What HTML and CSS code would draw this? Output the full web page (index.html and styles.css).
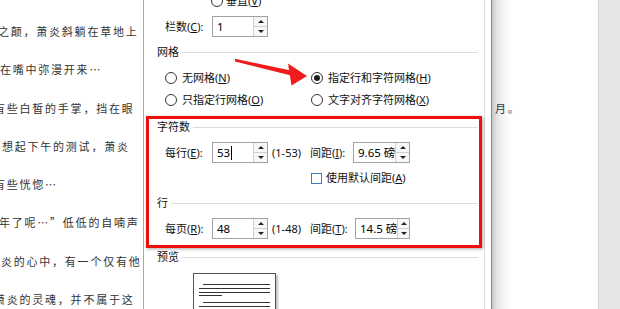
FILE: index.html
```html
<!DOCTYPE html>
<html lang="zh-CN">
<head>
<meta charset="utf-8">
<title>稿纸设置</title>
<link rel="stylesheet" href="styles.css">
</head>
<body>
<div class="screen">
  <div class="page-left">
    <div class="doc-line l1">之颠，萧炎斜躺在草地上</div>
    <div class="doc-line l2">在嘴中弥漫开来…</div>
    <div class="doc-line l3">有些白皙的手掌，挡在眼</div>
    <div class="doc-line l4">想起下午的测试，萧炎</div>
    <div class="doc-line l5">有些恍惚…</div>
    <div class="doc-line l6">年了呢…”低低的自喃声</div>
    <div class="doc-line l7">炎的心中，有一个仅有他</div>
    <div class="doc-line l8">萧炎的灵魂，并不属于这</div>
  </div>

  <div class="dialog">
    <div class="dlg-main">
      <div class="row row-v">
        <span class="radio"></span><span class="txt">垂直(<u>V</u>)</span>
      </div>
      <div class="row row-cols">
        <span class="lbl">栏数(<u>C</u>):</span>
        <span class="spin-input"><span class="val">1</span><span class="spin"><span class="up"></span><span class="down"></span></span></span>
      </div>

      <div class="group-title gt-grid"><span>网格</span></div>
      <div class="row radio-row rr1">
        <span class="opt"><span class="radio"></span><span class="txt">无网格(<u>N</u>)</span></span>
        <span class="opt"><span class="radio checked"></span><span class="txt">指定行和字符网格(<u>H</u>)</span></span>
      </div>
      <div class="row radio-row rr2">
        <span class="opt"><span class="radio"></span><span class="txt">只指定行网格(<u>O</u>)</span></span>
        <span class="opt"><span class="radio"></span><span class="txt">文字对齐字符网格(<u>X</u>)</span></span>
      </div>

      <div class="group-title gt-chars"><span>字符数</span></div>
      <div class="row field-row fr1">
        <span class="half">
          <span class="lbl">每行(<u>E</u>):</span>
          <span class="spin-input"><span class="val">53<span class="caret"></span></span><span class="spin"><span class="up"></span><span class="down"></span></span></span>
          <span class="range">(1-53)</span>
        </span>
        <span class="half">
          <span class="lbl lbl-r">间距(<u>I</u>):</span>
          <span class="spin-input wide"><span class="val">9.65 磅</span><span class="spin"><span class="up"></span><span class="down"></span></span></span>
        </span>
      </div>
      <div class="row check-row">
        <span class="half"></span>
        <span class="opt"><span class="check"></span><span class="txt">使用默认间距(<u>A</u>)</span></span>
      </div>

      <div class="group-title gt-lines"><span>行</span></div>
      <div class="row field-row fr2">
        <span class="half">
          <span class="lbl">每页(<u>R</u>):</span>
          <span class="spin-input"><span class="val">48</span><span class="spin"><span class="up"></span><span class="down"></span></span></span>
          <span class="range">(1-48)</span>
        </span>
        <span class="half">
          <span class="lbl lbl-r2">间距(<u>T</u>):</span>
          <span class="spin-input wide2"><span class="val">14.5 磅</span><span class="spin"><span class="up"></span><span class="down"></span></span></span>
        </span>
      </div>

      <div class="group-title gt-preview"><span>预览</span></div>
      <div class="preview">
        <div class="pl pl1"></div>
        <div class="pl pl2"></div>
        <div class="pl pl3"></div>
        <div class="pl pl4"></div>
        <div class="pl pl5"></div>
        <div class="pl pl6"></div>
      </div>
    </div>
    <div class="dlg-vline"></div>
    <div class="dlg-gap"></div>
  </div>

  <div class="page-right">
    <div class="doc-line r3">月。</div>
  </div>
  <div class="bg-gray"></div>
</div>

<div class="red-box"></div>
<svg class="arrow" width="620" height="309" viewBox="0 0 620 309">
  <polygon points="235,58.8 291,70.6 290,75.2 235,61.4" fill="#ee1c1c"/>
  <polygon points="288,63.5 307,76 291.5,85.5" fill="#ee1c1c"/>
</svg>
</body>
</html>
```

FILE: styles.css
```css
* { box-sizing: border-box; }

html, body {
  margin: 0;
  padding: 0;
}

body {
  width: 620px;
  height: 309px;
  overflow: hidden;
  position: relative;
  background: #fff;
  font-family: "Noto Sans", "Noto Sans CJK SC", sans-serif;
  color: #111;
}

.screen {
  display: flex;
  width: 620px;
  height: 309px;
  overflow: hidden;
}

/* ---------- document page (left) ---------- */
.page-left {
  width: 143px;
  flex-shrink: 0;
  overflow: hidden;
  padding-top: 12px;
  background: #fff;
}

.doc-line {
  font-family: "Noto Sans CJK SC", sans-serif;
  font-size: 11px;
  letter-spacing: 1.77px;
  line-height: 38.3px;
  height: 38.3px;
  color: #333;
  white-space: nowrap;
}

.l1 { margin-left: -2px; }
.l2 { margin-left: 0; }
.l3 { margin-left: -6px; }
.l4 { margin-left: 2px; }
.l5 { margin-left: -6px; }
.l6 { margin-left: -1px; }
.l7 { margin-left: 1px; }
.l8 { margin-left: -6px; }

/* ---------- dialog ---------- */
.dialog {
  width: 349px;
  height: 309px;
  flex-shrink: 0;
  display: flex;
  overflow: hidden;
  background: #fff;
  border-left: 1px solid #a8a8a8;
  border-right: 1px solid #858585;
}

.dlg-main {
  width: 340px;
  padding: 0 6px 0 13px;
  display: flex;
  flex-direction: column;
  font-size: 11px;
  line-height: 16px;
}

.dlg-main > * { flex-shrink: 0; }

.dlg-vline {
  width: 1px;
  background: #dedede;
}

.dlg-gap {
  width: 6px;
}

.row {
  display: flex;
  align-items: center;
  padding-left: 8px;
  white-space: nowrap;
}

u { text-decoration: underline; text-underline-offset: 1px; }

.row-v {
  height: 20px;
  margin-top: -9px;
  padding-left: 54px;
}
.row-v .txt { margin-left: 3px; }

.row-cols {
  height: 21px;
  margin-top: 5px;
}

.lbl {
  width: 47px;
  flex-shrink: 0;
}
.lbl-r { width: 43px; }
.lbl-r2 { width: 45px; }

.spin-input {
  display: flex;
  width: 56px;
  height: 21px;
  border: 1px solid #a2a2a2;
  background: #fff;
  flex-shrink: 0;
}
.spin-input.wide { width: 57px; }
.spin-input.wide2 { width: 55px; }

.val {
  flex: 1;
  display: flex;
  align-items: center;
  padding-left: 4px;
  font-size: 11.5px;
  color: #000;
}

.caret {
  display: inline-block;
  width: 1px;
  height: 14px;
  background: #000;
  margin-left: 1px;
}

.spin {
  width: 14px;
  display: flex;
  flex-direction: column;
  border-left: 1px solid #cfcfcf;
}
.spin span {
  flex: 1;
  display: flex;
  align-items: center;
  justify-content: center;
  background: #f7f7f7;
}
.spin .up { border-bottom: 1px solid #cfcfcf; }
.spin .up::before {
  content: "";
  border-left: 3px solid transparent;
  border-right: 3px solid transparent;
  border-bottom: 3px solid #222;
}
.spin .down::before {
  content: "";
  border-left: 3px solid transparent;
  border-right: 3px solid transparent;
  border-top: 3px solid #222;
}

.group-title {
  display: flex;
  align-items: center;
  height: 16px;
  white-space: nowrap;
}
.group-title::after {
  content: "";
  flex: 1;
  border-top: 1px solid #dcdcdc;
  margin-left: 3px;
}
.gt-grid { margin-top: 7px; }
.gt-chars { margin-top: 9px; }
.gt-lines { margin-top: 9px; }
.gt-preview { margin-top: 10px; }

.radio-row { height: 20px; }
.rr1 { margin-top: 8px; }
.rr2 { margin-top: 2px; }

.opt {
  display: flex;
  align-items: center;
}
.radio-row .opt:first-child { width: 146px; }
.opt .txt { margin-left: 5px; }

.radio {
  width: 12px;
  height: 12px;
  border: 1px solid #333;
  border-radius: 50%;
  display: flex;
  align-items: center;
  justify-content: center;
  background: #fff;
  flex-shrink: 0;
}
.radio.checked::after {
  content: "";
  width: 6px;
  height: 6px;
  border-radius: 50%;
  background: #1e1e1e;
}

.field-row { height: 21px; }
.fr1 { margin-top: 7px; }
.fr2 { margin-top: 7px; }

.half {
  display: flex;
  align-items: center;
  width: 145px;
  flex-shrink: 0;
}

.range { margin-left: 4px; }

.check-row { height: 16px; margin-top: 7px; }
.check-row .opt { margin-left: 1px; }
.check-row .txt { margin-left: 4px; }
.check {
  width: 11px;
  height: 11px;
  border: 1px solid #3a7cc6;
  background: #fff;
  flex-shrink: 0;
}

.preview {
  margin-top: 8px;
  margin-left: 36px;
  width: 83px;
  height: 60px;
  border: 1px solid #555;
  background: #fff;
  box-shadow: 2px 2px 2px rgba(0, 0, 0, 0.25);
  padding-top: 10px;
}
.pl {
  height: 1px;
  background: #333;
}
.pl1 { margin-left: 9px; width: 67px; }
.pl2 { margin-left: 5px; width: 71px; margin-top: 3px; }
.pl3 { margin-left: 5px; width: 71px; margin-top: 3px; }
.pl4 { margin-left: 5px; width: 23px; margin-top: 2px; }
.pl5 { margin-left: 9px; width: 67px; margin-top: 6px; }
.pl6 { margin-left: 5px; width: 71px; margin-top: 3px; }

/* ---------- document page (right) ---------- */
.page-right {
  width: 106px;
  flex-shrink: 0;
  padding-top: 88.6px;
  padding-left: 3px;
  background: linear-gradient(to right, #c8c8c8 0, #e4e4e4 5px, #f6f6f6 12px, #fff 20px);
}

.bg-gray {
  flex: 1;
  background: #e6e6e6;
  border-left: 1px solid #d6d6d6;
}

/* ---------- annotations ---------- */
.red-box {
  position: absolute;
  left: 146px;
  top: 116px;
  width: 336px;
  height: 132px;
  border: 3px solid #f20d0d;
  box-shadow: 1px 1px 3px rgba(0, 0, 0, 0.35);
}

.arrow {
  position: absolute;
  left: 0;
  top: 0;
  pointer-events: none;
}
```
